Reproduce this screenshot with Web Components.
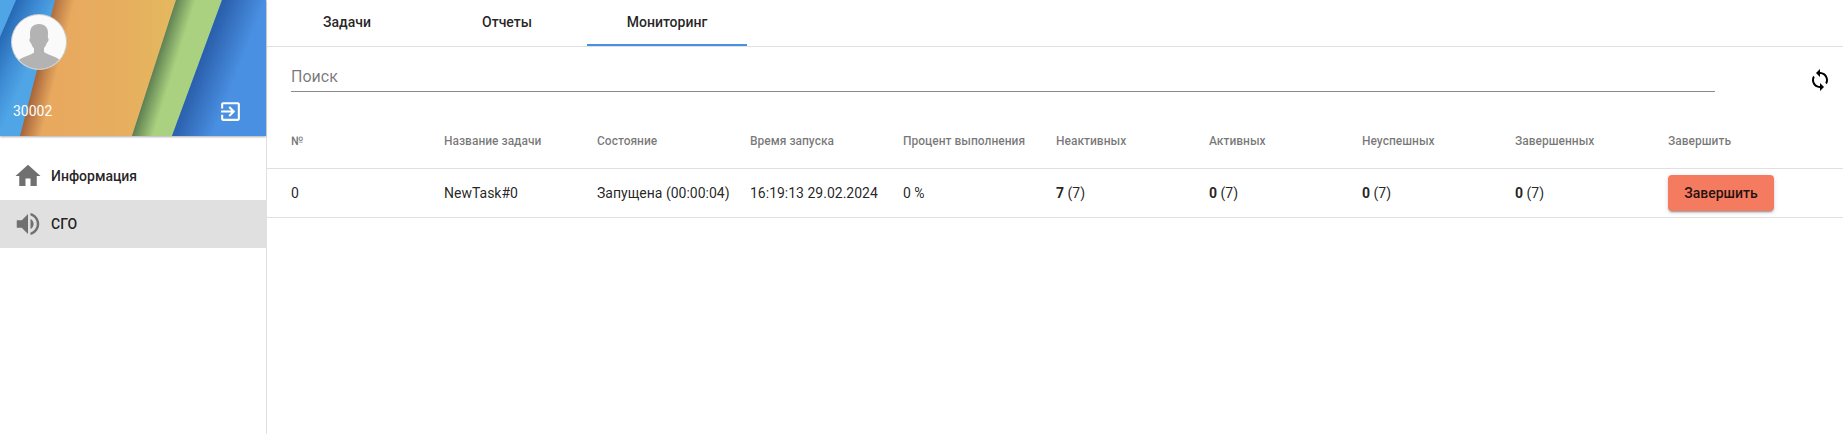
<!DOCTYPE html>
<html lang="ru">
<head>
<meta charset="utf-8">
<title>Мониторинг</title>
<style>
  html, body { margin: 0; height: 100%; background: #fff; }
  body { font: 14px Roboto, "Liberation Sans", sans-serif; color: rgba(0,0,0,.87); overflow: hidden; }
</style>
</head>
<body>
<app-shell>
  <side-panel slot="side">
    <user-banner slot="banner" login="30002"></user-banner>
    <nav-item icon="home">Информация</nav-item>
    <nav-item icon="volume" active>СГО</nav-item>
  </side-panel>
  <tab-bar slot="top">
    <tab-item>Задачи</tab-item>
    <tab-item>Отчеты</tab-item>
    <tab-item active>Мониторинг</tab-item>
  </tab-bar>
  <search-bar slot="top" placeholder="Поиск"></search-bar>
  <task-table slot="top"></task-table>
</app-shell>

<script>
const ICONS = {
  home: 'M10 20v-6h4v6h5v-8h3L12 3 2 12h3v8z',
  volume: 'M3 9v6h4l5 5V4L7 9H3zm13.5 3c0-1.77-1.02-3.29-2.5-4.03v8.05c1.48-.73 2.5-2.25 2.5-4.02zM14 3.23v2.06c2.89.86 5 3.54 5 6.71s-2.11 5.85-5 6.71v2.06c4.01-.91 7-4.49 7-8.77s-2.99-7.86-7-8.77z',
  exit: 'M10.09 15.59L11.5 17l5-5-5-5-1.41 1.41L12.67 11H3v2h9.67l-2.58 2.59zM19 3H5c-1.11 0-2 .9-2 2v4h2V5h14v14H5v-4H3v4c0 1.1.89 2 2 2h14c1.1 0 2-.9 2-2V5c0-1.1-.9-2-2-2z',
  sync: 'M12 4V1L8 5l4 4V6c3.31 0 6 2.69 6 6 0 1.01-.25 1.97-.7 2.8l1.46 1.46C19.54 15.03 20 13.57 20 12c0-4.42-3.58-8-8-8zm0 14c-3.31 0-6-2.69-6-6 0-1.01.25-1.97.7-2.8L5.24 7.74C4.46 8.97 4 10.43 4 12c0 4.42 3.58 8 8 8v3l4-4-4-4v3z'
};
function define(name, css, html, init) {
  customElements.define(name, class extends HTMLElement {
    constructor() {
      super();
      this.attachShadow({ mode: 'open' }).innerHTML = '<style>' + css + '</style>' + html;
    }
    connectedCallback() { if (init && !this._done) { this._done = true; init(this, this.shadowRoot); } }
  });
}

define('app-icon',
  ':host{display:block;width:var(--size,24px);height:var(--size,24px);color:inherit;flex:none} svg{display:block;width:100%;height:100%;fill:currentColor}',
  '<svg viewBox="0 0 24 24"><path></path></svg>',
  (el, root) => root.querySelector('path').setAttribute('d', ICONS[el.getAttribute('name')]));

define('app-shell',
  ':host{display:flex;height:434px} .side{flex:none;width:266px;border-right:1px solid #e0e0e0} .main{flex:1;min-width:0;display:flex;flex-direction:column}',
  '<div class="side"><slot name="side"></slot></div><div class="main"><slot name="top"></slot></div>');

define('side-panel',
  ':host{display:block} nav{padding-top:16px}',
  '<slot name="banner"></slot><nav><slot></slot></nav>');

define('user-banner',
  `:host{display:block;position:relative;height:136px;box-shadow:0 1px 2px rgba(0,0,0,.32);color:#fff}
   .bg{position:absolute;inset:0;width:266px;height:136px;display:block}
   .inner{position:relative;height:136px;box-sizing:border-box;display:flex;flex-direction:column;padding:14px 0 0 11px}
   .avatar{width:56px;height:56px;flex:none;display:block}
   .foot{display:flex;align-items:center;justify-content:space-between;margin-top:29px;padding:0 23px 0 2px}
   .login{font-size:14px;line-height:25px}
   app-icon{--size:25px;color:#fff}`,
  `<svg class="bg" viewBox="0 0 266 136" aria-hidden="true">
     <defs>
       <linearGradient id="b0" gradientUnits="userSpaceOnUse" x1="8" y1="18" x2="44" y2="34">
         <stop offset="0" stop-color="#2668b4"/><stop offset=".55" stop-color="#3f8dd5"/><stop offset="1" stop-color="#4fa5e6"/>
       </linearGradient>
       <linearGradient id="o" gradientUnits="userSpaceOnUse" x1="20" y1="136" x2="40" y2="141">
         <stop offset="0" stop-color="#a5643a"/><stop offset="1" stop-color="#e8a95f"/>
       </linearGradient>
       <linearGradient id="o2" gradientUnits="userSpaceOnUse" x1="40" y1="0" x2="176" y2="0">
         <stop offset="0" stop-color="#e8a95f" stop-opacity="0"/><stop offset="1" stop-color="#e4b95e"/>
       </linearGradient>
       <linearGradient id="g" gradientUnits="userSpaceOnUse" x1="132" y1="136" x2="151" y2="142">
         <stop offset="0" stop-color="#5d7f50"/><stop offset="1" stop-color="#a9d17f"/>
       </linearGradient>
       <linearGradient id="bl" gradientUnits="userSpaceOnUse" x1="172" y1="136" x2="208" y2="150">
         <stop offset="0" stop-color="#2b60ad"/><stop offset="1" stop-color="#4a90e2"/>
       </linearGradient>
     </defs>
     <rect width="266" height="136" fill="url(#b0)"/>
     <polygon points="0,0 16,0 0,37" fill="#4fa5e6"/>
     <polygon points="55,0 176,0 132,136 20,136" fill="url(#o)"/>
     <polygon points="55,0 176,0 132,136 20,136" fill="url(#o2)"/>
     <polygon points="176,0 222,0 172,136 132,136" fill="url(#g)"/>
     <polygon points="222,0 266,0 266,136 172,136" fill="url(#bl)"/>
   </svg>
   <div class="inner">
     <svg class="avatar" viewBox="0 0 56 56" aria-hidden="true">
       <defs><clipPath id="c"><circle cx="28" cy="28" r="27"/></clipPath></defs>
       <circle cx="28" cy="28" r="27.5" fill="#fafafa" stroke="#c9ccd0"/>
       <g clip-path="url(#c)" fill="#b3b3b3">
         <path d="M28 10c-6 0-9 3.5-9 9.5 0 2 .2 3.6.1 5-.6.2-.9 1-.6 2.2.3 1.2.8 2 1.5 2.2.8 2.4 1.8 4.2 3 5.4v4.2c-1.5 1.4-5 2.7-8.500 3.900-3.500 1.200-6 2.500-7.500 4.600V60h42V46.500c-1.500-2.100-4-3.400-7.500-4.600-3.500-1.200-7-2.500-8.500-3.900v-4.200c1.200-1.200 2.200-3 3-5.400.7-.2 1.200-1 1.500-2.200.3-1.200 0-2-.6-2.200-.1-1.400.1-3 .1-5C37 13.500 34 10 28 10z"/>
       </g>
     </svg>
     <div class="foot"><span class="login"></span><app-icon name="exit"></app-icon></div>
   </div>`,
  (el, root) => { root.querySelector('.login').textContent = el.getAttribute('login'); });

define('nav-item',
  `:host{display:flex;align-items:center;height:48px;padding-left:13px;font-weight:500;font-size:14px;color:rgba(0,0,0,.87)}
   :host([active]){background:#e0e0e0}
   app-icon{--size:30px;color:#707070;margin-right:8px}`,
  '<app-icon></app-icon><slot></slot>',
  (el, root) => {
    const i = document.createElement('app-icon');
    i.setAttribute('name', el.getAttribute('icon'));
    root.querySelector('app-icon').replaceWith(i);
  });

define('tab-bar',
  ':host{display:flex;flex:none;height:46px;border-bottom:1px solid #e0e0e0}',
  '<slot></slot>');

define('tab-item',
  `:host{display:flex;align-items:center;justify-content:center;box-sizing:border-box;width:160px;height:46px;font-size:14px;font-weight:500;color:rgba(0,0,0,.87);border-bottom:2px solid transparent}
   :host([active]){border-bottom-color:#4a90e2}`,
  '<slot></slot>');

define('search-bar',
  `:host{display:flex;flex:none;align-items:flex-start;height:66px;box-sizing:border-box;padding:16px 11px 0 24px}
   .field{flex:1;height:28px;border-bottom:1px solid #8a8a8a;font-size:16px;line-height:28px;color:rgba(0,0,0,.54)}
   app-icon{color:#000;margin:5px 0 0 93px}`,
  '<div class="field"></div><app-icon name="sync"></app-icon>',
  (el, root) => { root.querySelector('.field').textContent = el.getAttribute('placeholder'); });

define('task-button',
  `:host{display:inline-flex;align-items:center;justify-content:center;width:106px;height:36px;border-radius:4px;background:#f47a60;font-size:14px;font-weight:500;color:rgba(0,0,0,.87);box-shadow:0 3px 1px -2px rgba(0,0,0,.2),0 2px 2px 0 rgba(0,0,0,.14),0 1px 5px 0 rgba(0,0,0,.12)}`,
  '<slot></slot>');

define('table-row',
  `:host{display:flex;align-items:center;box-sizing:border-box;padding:0 22px 0 24px;border-bottom:1px solid #e0e0e0;min-height:49px;font-size:14px;color:rgba(0,0,0,.87)}
   :host([head]){min-height:56px;font-size:12px;font-weight:500;color:rgba(0,0,0,.54)}
   ::slotted(*){flex:1 1 0;min-width:0}`,
  '<slot></slot>');

define('task-table',
  ':host{display:block}',
  `<table-row head>
     <span>№</span><span>Название задачи</span><span>Состояние</span><span>Время запуска</span><span>Процент выполнения</span><span>Неактивных</span><span>Активных</span><span>Неуспешных</span><span>Завершенных</span><span>Завершить</span>
   </table-row>
   <table-row>
     <span>0</span><span>NewTask#0</span><span>Запущена (00:00:04)</span><span>16:19:13 29.02.2024</span><span>0 %</span>
     <span><b>7</b> (7)</span><span><b>0</b> (7)</span><span><b>0</b> (7)</span><span><b>0</b> (7)</span>
     <span><task-button>Завершить</task-button></span>
   </table-row>`);
</script>
</body>
</html>
